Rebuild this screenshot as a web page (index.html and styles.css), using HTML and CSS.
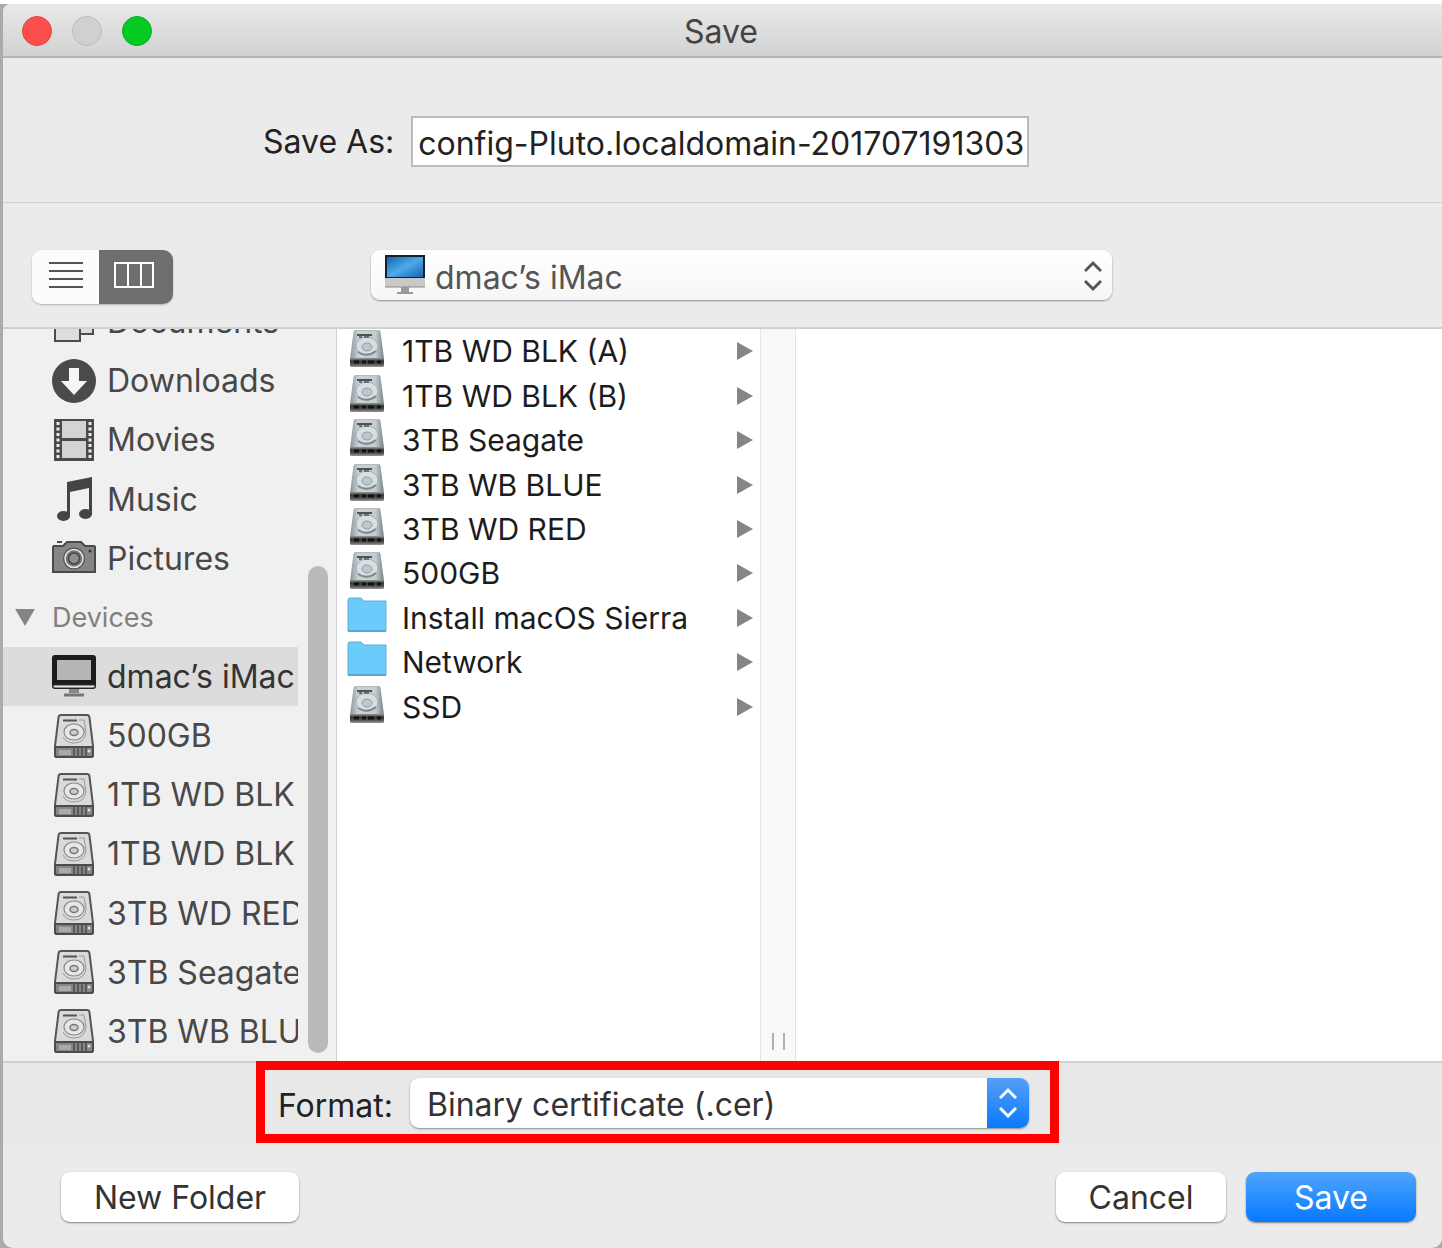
FILE: index.html
```html
<!DOCTYPE html>
<html lang="en">
<head>
  <meta charset="UTF-8">
  <title>Save</title>
  <link rel="stylesheet" href="styles.css">
</head>
<body>
  <!-- icon shapes used by the lists -->
  <svg class="sprite" aria-hidden="true">
    <defs>
      <linearGradient id="metal" x1="0" y1="0" x2="1" y2="0">
        <stop offset="0" stop-color="#8f9597"/>
        <stop offset="0.25" stop-color="#c9d1d4"/>
        <stop offset="0.75" stop-color="#c3cdd1"/>
        <stop offset="1" stop-color="#7b8082"/>
      </linearGradient>
      <linearGradient id="metalEdge" x1="0" y1="0" x2="0" y2="1">
        <stop offset="0" stop-color="#999"/>
        <stop offset="0.35" stop-color="#333"/>
        <stop offset="0.7" stop-color="#555"/>
        <stop offset="1" stop-color="#999"/>
      </linearGradient>
      <linearGradient id="screen" x1="0" y1="0" x2="1" y2="1">
        <stop offset="0" stop-color="#1765ad"/>
        <stop offset="0.5" stop-color="#4eaaea"/>
        <stop offset="1" stop-color="#1463b0"/>
      </linearGradient>
    </defs>
    <symbol id="disk" viewBox="0 0 40 44">
      <path d="M7 1h26q2 0 2.400 2L39 32v9q0 2-2 2H3q-2 0-2-2v-9L4.600 3Q5 1 7 1z" fill="#dadada" stroke="#555" stroke-width="2"/>
      <path d="M1 33h38v8q0 2-2 2H3q-2 0-2-2z" fill="#858585" stroke="#4c4c4c" stroke-width="2"/>
      <path d="M5 36h12v5H5z" fill="#aaa"/>
      <path d="M20 34v8M24 34v8M28 34v8M32 34v8" stroke="#4c4c4c" stroke-width="1.500"/>
      <circle cx="35" cy="37" r="1.500" fill="#ddd"/>
      <path d="M9 6.500h14" stroke="#555" stroke-width="2"/>
      <path d="M25 6h5l2 12q-1 11-12 11-8 0-11-6" fill="none" stroke="#999" stroke-width="1"/>
      <ellipse cx="20" cy="18" rx="10" ry="8" fill="#e7e7e7" stroke="#8a8a8a" stroke-width="1.200"/>
      <ellipse cx="20" cy="18.500" rx="4" ry="3" fill="#ccc" stroke="#777" stroke-width="1.500"/>
    </symbol>
    <symbol id="drive" viewBox="0 0 40 40">
      <path d="M8 1h24q1 0 1.500 2L37 30v6q0 2-2 2H5q-2 0-2-2v-6L6.500 3Q7 1 8 1z" fill="url(#metal)"/>
      <path d="M8 1.500h24" stroke="#b5bbbd" stroke-width="1"/>
      <ellipse cx="20" cy="17" rx="11" ry="9" fill="#d6e0e4" stroke="#a4adb1"/>
      <path d="M11 23q9 6 18-1" fill="none" stroke="#7d888d" stroke-width="2"/>
      <ellipse cx="20" cy="18" rx="5" ry="4" fill="#bdc8cd" stroke="#929da2"/>
      <path d="M10 6h15" stroke="#4d5356" stroke-width="2"/>
      <path d="M12 8h3M17 8h5" stroke="#6b7275" stroke-width="2"/>
      <path d="M3 29h34v7q0 2-2 2H5q-2 0-2-2z" fill="url(#metalEdge)"/>
      <path d="M7 33h5M15 33h4M21 33h6M30 33h4" stroke="#111" stroke-width="3"/>
    </symbol>
    <symbol id="folder" viewBox="0 0 40 40">
      <path d="M1 4q0-2 2-2h11l3 3h22v30H1z" fill="#6bcbfa" stroke="#62acd0"/>
      <path d="M1 35h38" stroke="#58a8cf" stroke-width="2"/>
    </symbol>
    <symbol id="docs" viewBox="0 0 44 44">
      <path d="M13 1h20l8 8v25H13z" fill="#ddd" stroke="#4c4c4c" stroke-width="2"/>
      <path d="M3 8h18l7 7v26H3z" fill="#ddd" stroke="#4c4c4c" stroke-width="2"/>
    </symbol>
    <symbol id="downloads" viewBox="0 0 44 44">
      <circle cx="22" cy="22" r="22" fill="#4a4a4a"/>
      <path d="M17 9h10v13h8L22 36 9 22h8z" fill="#f6f6f6"/>
    </symbol>
    <symbol id="movies" viewBox="0 0 44 44">
      <path d="M2 1h40v42H2z" fill="#4a4a4a"/>
      <path d="M10 3h24v17H10zM10 23h24v17H10z" fill="#d4d4d4"/>
      <path d="M6 4v38M38 4v38" stroke="#eee" stroke-width="3" stroke-dasharray="3 2.500"/>
    </symbol>
    <symbol id="music" viewBox="0 0 44 44">
      <path d="M15 5l25-5v38h-3V11l-19 4v25h-3z" fill="#444"/>
      <ellipse cx="11.500" cy="39" rx="6.500" ry="5" fill="#444"/>
      <ellipse cx="33.500" cy="37" rx="6.500" ry="5" fill="#444"/>
    </symbol>
    <symbol id="pictures" viewBox="0 0 44 44">
      <path d="M1 11q0-1 1-1h9l4-4h14l4 4h9q1 0 1 1v25H1z" fill="#858585" stroke="#4a4a4a" stroke-width="2"/>
      <path d="M5 6h5" stroke="#4a4a4a" stroke-width="2"/>
      <circle cx="22" cy="22.500" r="11" fill="#555"/>
      <circle cx="22" cy="22.500" r="9" fill="#777" stroke="#e6e6e6" stroke-width="1.500"/>
      <circle cx="22" cy="22.500" r="5.500" fill="#8f8f8f" stroke="#444" stroke-width="1.500"/>
      <circle cx="38" cy="15" r="1.500" fill="#333"/>
    </symbol>
    <symbol id="display" viewBox="0 0 44 44">
      <rect x="0" y="1" width="44" height="34" rx="3" fill="#1c1c1c"/>
      <path d="M5 6h34v20H5z" fill="#b6b6b6"/>
      <path d="M1 31h42v1q0 2-2 2H3q-2 0-2-2z" fill="#e8e8e8" stroke="#333"/>
      <path d="M17 35h10v4H17z" fill="#888"/>
      <path d="M12 41h20" stroke="#777" stroke-width="3"/>
    </symbol>
    <symbol id="arrows" viewBox="0 0 18 32">
      <path d="M1 11l8-8 8 8M1 21l8 8 8-8" fill="none" stroke="currentColor" stroke-width="3"/>
    </symbol>
  </svg>

  <main class="window">
    <header class="titlebar">
      <div class="lights">
        <button class="light close" aria-label="Close"></button>
        <button class="light minimize" aria-label="Minimize" disabled></button>
        <button class="light zoom" aria-label="Zoom"></button>
      </div>
      <h1>Save</h1>
    </header>

    <div class="name-bar">
      <label for="fileName">Save As:</label>
      <input type="text" id="fileName" value="config-Pluto.localdomain-201707191303">
    </div>

    <div class="toolbar">
      <div class="view-switch">
        <button aria-label="List view">
          <svg width="34" height="26" viewBox="0 0 34 26"><path d="M0 1h34M0 9h34M0 17h34M0 25h34" stroke="#555" stroke-width="2"/></svg>
        </button>
        <button class="active" aria-label="Column view">
          <svg width="40" height="26" viewBox="0 0 40 26"><path d="M1 1h38v24H1zM14 1v24M27 1v24" fill="none" stroke="#fff" stroke-width="2"/></svg>
        </button>
      </div>
      <div class="select location">
        <svg class="imac" width="40" height="40" viewBox="0 0 40 40">
          <path d="M0 0h40v24H0z" fill="#14202c"/>
          <path d="M2 2h36v20H2z" fill="url(#screen)"/>
          <path d="M0 23h40v8q0 1-1 1H1q-1 0-1-1z" fill="#c8c8c8"/>
          <path d="M0 32h40" stroke="#888"/>
          <path d="M16 32h8v5h-8z" fill="#999"/>
          <path d="M12 38h16" stroke="#999" stroke-width="2"/>
        </svg>
        <select aria-label="Location">
          <option>dmac’s iMac</option>
        </select>
        <svg class="arrows"><use href="#arrows"/></svg>
      </div>
    </div>

    <div class="browser">
      <nav class="sidebar">
        <ul>
          <li><a href="#"><svg><use href="#docs"/></svg>Documents</a></li>
          <li><a href="#"><svg><use href="#downloads"/></svg>Downloads</a></li>
          <li><a href="#"><svg><use href="#movies"/></svg>Movies</a></li>
          <li><a href="#"><svg><use href="#music"/></svg>Music</a></li>
          <li><a href="#"><svg><use href="#pictures"/></svg>Pictures</a></li>
          <li><h2><svg viewBox="0 0 22 20"><path d="M0 1h22L11 20z" fill="#858585"/></svg>Devices</h2></li>
          <li><a href="#" class="selected"><svg><use href="#display"/></svg>dmac’s iMac</a></li>
          <li><a href="#"><svg><use href="#disk"/></svg>500GB</a></li>
          <li><a href="#"><svg><use href="#disk"/></svg>1TB WD BLK</a></li>
          <li><a href="#"><svg><use href="#disk"/></svg>1TB WD BLK</a></li>
          <li><a href="#"><svg><use href="#disk"/></svg>3TB WD RED</a></li>
          <li><a href="#"><svg><use href="#disk"/></svg>3TB Seagate</a></li>
          <li><a href="#"><svg><use href="#disk"/></svg>3TB WB BLU</a></li>
        </ul>
        <div class="scrollbar"><div class="thumb"></div></div>
      </nav>

      <ul class="column">
        <li><a href="#"><svg><use href="#drive"/></svg>1TB WD BLK (A)</a></li>
        <li><a href="#"><svg><use href="#drive"/></svg>1TB WD BLK (B)</a></li>
        <li><a href="#"><svg><use href="#drive"/></svg>3TB Seagate</a></li>
        <li><a href="#"><svg><use href="#drive"/></svg>3TB WB BLUE</a></li>
        <li><a href="#"><svg><use href="#drive"/></svg>3TB WD RED</a></li>
        <li><a href="#"><svg><use href="#drive"/></svg>500GB</a></li>
        <li><a href="#"><svg><use href="#folder"/></svg>Install macOS Sierra</a></li>
        <li><a href="#"><svg><use href="#folder"/></svg>Network</a></li>
        <li><a href="#"><svg><use href="#drive"/></svg>SSD</a></li>
      </ul>
      <div class="splitter"><span class="grip"></span></div>
      <div class="column-empty"></div>
    </div>

    <div class="format-bar">
      <div class="format-box">
        <label for="format">Format:</label>
        <div class="select format">
          <select id="format">
            <option>Binary certificate (.cer)</option>
          </select>
          <span class="cap"><svg class="arrows"><use href="#arrows"/></svg></span>
        </div>
      </div>
    </div>

    <footer class="actions">
      <button class="btn new-folder">New Folder</button>
      <button class="btn">Cancel</button>
      <button class="btn primary">Save</button>
    </footer>
  </main>
</body>
</html>
```

FILE: styles.css
```css
* {
  box-sizing: border-box;
}

body {
  margin: 0;
  background-color: #ababab;
  border-top: 4px solid #fff;
  padding-left: 3px;
}

body, input, select, button {
  font-family: Inter, "Liberation Sans", sans-serif;
  font-size: 32px;
  color: #222;
}

h1, h2, ul {
  margin: 0;
  padding: 0;
  font-size: 32px;
  font-weight: normal;
  list-style: none;
}

a {
  color: inherit;
  text-decoration: none;
}

button {
  border: none;
  padding: 0;
}

.sprite {
  position: absolute;
  width: 0;
  height: 0;
}

.window {
  display: flex;
  flex-direction: column;
  min-height: calc(100vh - 4px);
  background-color: #ebebeb;
  border-radius: 8px 0 10px 10px;
  overflow: hidden;
}

/* title bar */
.titlebar {
  display: grid;
  grid-template-columns: 1fr auto 1fr;
  align-items: center;
  height: 54px;
  padding: 2px 22px 0 19px;
  background: linear-gradient(#e9e9e9, #d2d2d2);
  border-bottom: 2px solid #b5b5b5;
}

.titlebar h1 {
  color: #444;
}

.lights {
  display: flex;
  gap: 20px;
}

.light {
  width: 30px;
  height: 30px;
  border-radius: 50%;
}

.close {
  background-color: #fc4e4b;
  border: 1px solid #e0443f;
}

.minimize {
  background-color: #d0d0d0;
  border: 1px solid #bcbcbc;
}

.zoom {
  background-color: #04ca24;
  border: 1px solid #08ac20;
}

/* file name */
.name-bar {
  display: flex;
  align-items: center;
  gap: 17px;
  height: 145px;
  padding: 22px 413px 0 260px;
  border-bottom: 1px solid #d0d0d0;
}

.name-bar label {
  flex: 0 0 130px;
  text-align: right;
  white-space: nowrap;
}

.name-bar input {
  flex: 1;
  min-width: 0;
  height: 51px;
  padding: 4px 0 0 5px;
  border: 2px solid #bcbcbc;
  background-color: #fff;
}

/* view switch and location */
.toolbar {
  display: flex;
  align-items: center;
  gap: 198px;
  height: 126px;
  padding: 24px 330px 0 29px;
  border-bottom: 2px solid #cfcfcf;
}

.view-switch {
  display: flex;
  flex: none;
  height: 54px;
  border-radius: 10px;
  overflow: hidden;
  box-shadow: 0 1px 2px rgba(0, 0, 0, 0.25);
}

.view-switch button {
  display: flex;
  align-items: center;
  justify-content: center;
  width: 67px;
  padding-bottom: 4px;
  background-color: #fcfcfc;
}

.view-switch .active {
  width: 74px;
  padding-right: 4px;
  background-color: #6e6e6e;
}

.select {
  position: relative;
  flex: 1;
  height: 50px;
  border-radius: 9px;
  background-color: #fff;
  box-shadow: 0 1px 2px rgba(0, 0, 0, 0.4);
}

.select select {
  width: 100%;
  height: 100%;
  border: none;
  background: none;
  appearance: none;
  color: #333;
}

.arrows {
  width: 18px;
  height: 32px;
  pointer-events: none;
}

.location {
  margin-bottom: 4px;
  background: linear-gradient(#fff, #f6f6f6);
}

.location select {
  padding: 4px 50px 0 64px;
  color: #555;
}

.imac {
  position: absolute;
  left: 14px;
  top: 5px;
  pointer-events: none;
}

.location .arrows {
  position: absolute;
  right: 10px;
  top: 10px;
  color: #555;
}

/* file browser */
.browser {
  display: flex;
  flex: 1;
  background-color: #fff;
}

.sidebar {
  display: flex;
  flex: 0 0 334px;
  height: 732px;
  background-color: #f0f0f0;
  border-right: 1px solid #d2d2d2;
  overflow: hidden;
}

/* scrolled to the end, the first row is cut off */
.sidebar ul {
  display: grid;
  grid-auto-rows: 1fr;
  flex: 0 0 295px;
  align-self: flex-end;
  height: 769px;
  overflow: hidden;
}

.sidebar a, .sidebar h2 {
  display: flex;
  align-items: center;
  gap: 11px;
  height: 100%;
  padding-left: 49px;
  color: #484848;
  white-space: nowrap;
}

.sidebar svg {
  flex: none;
  width: 44px;
  height: 44px;
}

.sidebar h2 {
  gap: 17px;
  padding-left: 12px;
  font-size: 27px;
  color: #808080;
}

.sidebar h2 svg {
  width: 20px;
  height: 18px;
}

.sidebar .selected {
  background-color: #dcdcdc;
  color: #333;
}

.scrollbar {
  display: flex;
  flex: 1;
  align-items: flex-end;
  padding: 8px 8px 8px 10px;
}

.thumb {
  width: 100%;
  height: 68%;
  border-radius: 10px;
  background-color: #bababa;
}

.column {
  display: grid;
  grid-auto-rows: 1fr;
  flex: 0 0 423px;
  height: 400px;
  font-size: 30px;
}

.column a {
  display: flex;
  align-items: center;
  gap: 15px;
  height: 100%;
  padding: 0 7px 0 10px;
  color: #1c1c1c;
}

.column svg {
  width: 40px;
  height: 40px;
  margin-bottom: 4px;
}

.column a::after {
  content: "";
  margin-left: auto;
  border-left: 16px solid #858585;
  border-top: 9px solid transparent;
  border-bottom: 9px solid transparent;
}

.splitter {
  display: flex;
  flex: 0 0 36px;
  align-items: flex-end;
  justify-content: center;
  padding-bottom: 11px;
  background-color: #f9f9f9;
  border-left: 1px solid #e4e4e4;
  border-right: 1px solid #e4e4e4;
}

.grip {
  width: 13px;
  height: 17px;
  border-left: 2px solid #b0b0b0;
  border-right: 2px solid #b0b0b0;
}

.column-empty {
  flex: 1;
}

/* format */
.format-bar {
  height: 82px;
  padding: 0 383px 0 253px;
  background-color: #e8e8e8;
  box-shadow: inset 0 2px 0 #d0d0d0;
}

.format-box {
  display: flex;
  align-items: center;
  gap: 17px;
  height: 82px;
  padding: 2px 21px 0 12px;
  border: 9px solid #ff0000;
}

.format-box label {
  flex: 0 0 116px;
  padding-top: 4px;
  text-align: right;
}

.format select {
  padding: 2px 50px 0 17px;
}

.cap {
  position: absolute;
  right: 0;
  top: 0;
  display: flex;
  align-items: center;
  justify-content: center;
  width: 42px;
  height: 100%;
  border-radius: 0 9px 9px 0;
  background: linear-gradient(#559ff5, #0a7aff);
  color: #fff;
  pointer-events: none;
}

/* buttons */
.actions {
  display: flex;
  gap: 20px;
  height: 105px;
  padding: 29px 26px 0 58px;
}

.btn {
  width: 170px;
  height: 50px;
  border-radius: 9px;
  background-color: #fff;
  box-shadow: 0 1px 2px rgba(0, 0, 0, 0.45);
  color: #333;
}

.new-folder {
  width: 238px;
  margin-right: auto;
}

.primary {
  background: linear-gradient(#4fa5fb, #067aff);
  color: #fff;
}
```
